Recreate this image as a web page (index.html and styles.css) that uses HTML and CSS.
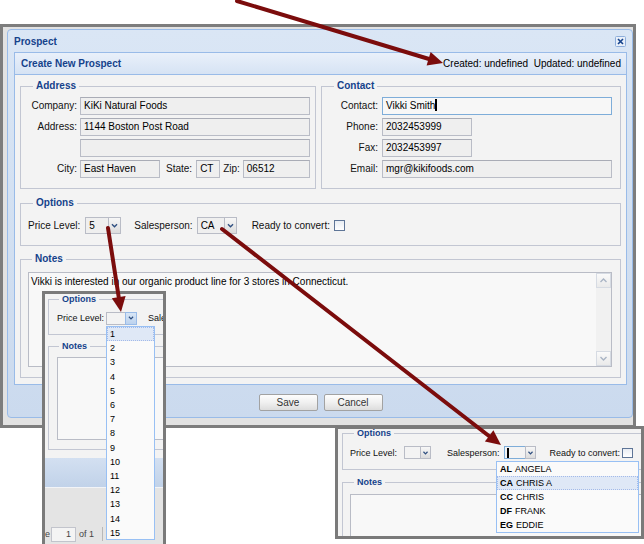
FILE: index.html
```html
<!DOCTYPE html>
<html>
<head>
<meta charset="utf-8">
<title>Prospect</title>
<link rel="stylesheet" href="styles.css">
</head>
<body>
<div class="shot">
  <div class="win">
    <div class="win-title">
      <span>Prospect</span>
      <span class="close"><svg width="11" height="11" viewBox="0 0 11 11"><rect x="0.5" y="0.5" width="10" height="10" rx="1" fill="#e8eff9" stroke="#8eaedb"/><path d="M3 3 L8 8 M8 3 L3 8" stroke="#15428b" stroke-width="1.6"/></svg></span>
    </div>
    <div class="panel">
      <div class="panel-head">
        <span class="ph-title">Create New Prospect</span>
        <span class="ph-meta">Created: undefined&nbsp; Updated: undefined</span>
      </div>
      <div class="panel-body">
        <div class="row-top">
          <fieldset class="fs fs-address">
            <legend>Address</legend>
            <div class="grid grid-address">
              <label>Company:</label><div class="input">KiKi Natural Foods</div>
              <label>Address:</label><div class="input">1144 Boston Post Road</div>
              <label></label><div class="input"></div>
              <label>City:</label>
              <div class="city-row">
                <div class="input w-city">East Haven</div>
                <label class="lbl-state">State:</label>
                <div class="input w-state">CT</div>
                <label class="lbl-zip">Zip:</label>
                <div class="input w-zip">06512</div>
              </div>
            </div>
          </fieldset>
          <fieldset class="fs fs-contact">
            <legend>Contact</legend>
            <div class="grid grid-contact">
              <label>Contact:</label><div class="input focus">Vikki Smith<span class="caret"></span></div>
              <label>Phone:</label><div class="input w-phone">2032453999</div>
              <label>Fax:</label><div class="input w-phone">2032453997</div>
              <label>Email:</label><div class="input">mgr@kikifoods.com</div>
            </div>
          </fieldset>
        </div>
        <fieldset class="fs fs-options">
          <legend>Options</legend>
          <div class="opt-row">
            <span>Price Level:</span>
            <span class="combo c-price"><span class="c-in">5</span><span class="c-tr"><svg width="13" height="15" viewBox="0 0 13 15"><path d="M3.5 6 L6.5 9 L9.5 6" fill="none" stroke="#2f4f80" stroke-width="1.6"/></svg></span></span>
            <span class="lbl-sales">Salesperson:</span>
            <span class="combo c-sales"><span class="c-in">CA</span><span class="c-tr"><svg width="13" height="15" viewBox="0 0 13 15"><path d="M3.5 6 L6.5 9 L9.5 6" fill="none" stroke="#2f4f80" stroke-width="1.6"/></svg></span></span>
            <span class="lbl-ready">Ready to convert:</span>
            <span class="check"></span>
          </div>
        </fieldset>
        <fieldset class="fs fs-notes">
          <legend>Notes</legend>
          <div class="textarea">
            <div class="ta-text">Vikki is interested in our organic product line for 3 stores in Connecticut.</div>
            <div class="sbar">
              <span class="sb-btn"><svg width="13" height="13" viewBox="0 0 13 13"><path d="M3.5 8 L6.5 5 L9.5 8" fill="none" stroke="#a9b4c4" stroke-width="1.4"/></svg></span>
              <span class="sb-track"></span>
              <span class="sb-btn"><svg width="13" height="13" viewBox="0 0 13 13"><path d="M3.5 5 L6.5 8 L9.5 5" fill="none" stroke="#a9b4c4" stroke-width="1.4"/></svg></span>
            </div>
          </div>
        </fieldset>
      </div>
    </div>
    <div class="win-foot">
      <button class="btn">Save</button>
      <button class="btn">Cancel</button>
    </div>
  </div>
</div>

<div class="inset inset-left">
  <div class="li-body">
    <fieldset class="ifs li-options">
      <legend>Options</legend>
      <div class="irow">
        <span class="li-lbl">Price Level:</span>
        <span class="icombo li-combo"><span class="ic-in"></span><span class="ic-tr active"><svg width="12" height="12" viewBox="0 0 12 12"><path d="M3.5 4.5 L6 7 L8.5 4.5" fill="none" stroke="#2f4f80" stroke-width="1.5"/></svg></span></span>
        <span class="li-sale">Sale</span>
      </div>
    </fieldset>
    <fieldset class="ifs li-notes">
      <legend>Notes</legend>
      <div class="ita li-ta"></div>
    </fieldset>
  </div>
  <div class="li-band"></div>
  <div class="li-pager">
    <span class="pg-page">e</span>
    <span class="pg-input">1</span>
    <span class="pg-of">of 1</span>
    <span class="pg-sep"></span>
  </div>
  <div class="ilist li-list">
    <div class="it sel">1</div>
    <div class="it">2</div>
    <div class="it">3</div>
    <div class="it">4</div>
    <div class="it">5</div>
    <div class="it">6</div>
    <div class="it">7</div>
    <div class="it">8</div>
    <div class="it">9</div>
    <div class="it">10</div>
    <div class="it">11</div>
    <div class="it">12</div>
    <div class="it">13</div>
    <div class="it">14</div>
    <div class="it">15</div>
  </div>
</div>

<div class="inset inset-right">
  <fieldset class="ifs ri-options">
    <legend>Options</legend>
    <div class="irow">
      <span>Price Level:</span>
      <span class="icombo ri-c1"><span class="ic-in"></span><span class="ic-tr"><svg width="11" height="12" viewBox="0 0 11 12"><path d="M3 4.5 L5.5 7 L8 4.5" fill="none" stroke="#2f4f80" stroke-width="1.5"/></svg></span></span>
      <span class="ri-sales">Salesperson:</span>
      <span class="icombo ri-c2"><span class="ic-in"><span class="icaret"></span></span><span class="ic-tr"><svg width="11" height="12" viewBox="0 0 11 12"><path d="M3 4.5 L5.5 7 L8 4.5" fill="none" stroke="#2f4f80" stroke-width="1.5"/></svg></span></span>
      <span class="ri-ready">Ready to convert:</span>
      <span class="icheck"></span>
    </div>
  </fieldset>
  <fieldset class="ifs ri-notes">
    <legend>Notes</legend>
    <div class="ita ri-ta"></div>
  </fieldset>
  <div class="ilist ri-list">
    <div class="it"><b>AL</b> ANGELA</div>
    <div class="it sel"><b>CA</b> CHRIS A</div>
    <div class="it"><b>CC</b> CHRIS</div>
    <div class="it"><b>DF</b> FRANK</div>
    <div class="it"><b>EG</b> EDDIE</div>
  </div>
</div>

<svg class="arrows" width="644" height="544" viewBox="0 0 644 544">
  <g stroke="#7b0c0c" stroke-width="4" stroke-linecap="round" fill="#7b0c0c">
    <line x1="237" y1="1" x2="429" y2="59"/>
    <polygon stroke="none" points="443,63 426.6,65.4 430.6,52"/>
    <line x1="108" y1="228" x2="118.7" y2="297"/>
    <polygon stroke="none" points="121,312 111.8,298.3 125.6,296.1"/>
    <line x1="222" y1="229" x2="489" y2="436"/>
    <polygon stroke="none" points="501,445 484.9,441.4 493.4,430.3"/>
  </g>
</svg>
</body>
</html>
```

FILE: styles.css
```css
html, body {
  margin: 0;
  padding: 0;
}
body {
  width: 644px;
  height: 544px;
  position: relative;
  overflow: hidden;
  background: #ffffff;
  font-family: "Liberation Sans", Arial, sans-serif;
  font-size: 10px;
  color: #111;
}

/* main screenshot frame */
.shot {
  margin-top: 24px;
  width: 636px;
  height: 404px;
  box-sizing: border-box;
  border: 3px solid #7d7d7d;
  background: #e2e2e2;
  padding: 2px 0 0 4px;
}
.win {
  width: 626px;
  height: 389px;
  box-sizing: border-box;
  border: 1px solid #99bbe8;
  border-radius: 4px;
  background: linear-gradient(#dae6f5, #cbdaee);
  padding: 0 5px 0 6px;
  display: flex;
  flex-direction: column;
}
.win-title {
  height: 22px;
  display: flex;
  align-items: center;
  justify-content: space-between;
  font-weight: bold;
  color: #15428b;
}
.close {
  display: flex;
  margin-right: 1px;
}
.panel {
  height: 333px;
  box-sizing: border-box;
  border: 1px solid #99bbe8;
  display: flex;
  flex-direction: column;
  background: #f3f3f3;
}
.panel-head {
  height: 22px;
  box-sizing: border-box;
  border-bottom: 1px solid #99bbe8;
  background: linear-gradient(#e9f0fa, #d6e3f4);
  display: flex;
  align-items: center;
  justify-content: space-between;
  padding: 0 5px 0 6px;
}
.ph-title {
  font-weight: bold;
  color: #15428b;
}
.ph-meta {
  color: #000;
}
.panel-body {
  flex: 1;
  padding: 5px 5px 0 5px;
  background: #f3f3f3;
}

/* fieldsets */
.fs {
  margin: 0;
  min-width: 0;
  border: 1px solid #c2c6d2;
  padding: 5px 8px 10px 8px;
}
.fs legend {
  padding: 0 3px;
  margin-left: 4px;
  font-weight: bold;
  color: #15428b;
  line-height: 12px;
}
.row-top {
  display: flex;
  gap: 5px;
}
.fs-address {
  width: 296px;
  box-sizing: border-box;
  flex: none;
  padding-right: 5px;
}
.fs-contact {
  flex: 1;
}
.grid {
  display: grid;
  grid-auto-rows: 18px;
  row-gap: 3px;
}
.grid-address {
  grid-template-columns: 48px 1fr;
  column-gap: 3px;
}
.grid-contact {
  grid-template-columns: 48px 1fr;
  column-gap: 4px;
}
.grid label {
  text-align: right;
  line-height: 18px;
  color: #111;
}
.input {
  box-sizing: border-box;
  height: 18px;
  line-height: 16px;
  padding: 0 3px;
  border: 1px solid #b9bcc6;
  border-top-color: #a9acb6;
  background: #efefef;
  color: #000;
  white-space: nowrap;
  overflow: hidden;
}
.input.focus {
  border-color: #7eadd9;
  background: #f7f7f7;
}
.caret {
  display: inline-block;
  width: 2px;
  height: 12px;
  background: #000;
  vertical-align: -2px;
}
.w-phone {
  width: 90px;
}
.city-row {
  display: flex;
  align-items: center;
}
.city-row label {
  line-height: 18px;
}
.w-city {
  width: 80px;
}
.lbl-state {
  margin: 0 4px 0 6px;
}
.w-state {
  width: 24px;
}
.lbl-zip {
  margin: 0 3px 0 3px;
}
.w-zip {
  flex: 1;
}

/* options */
.fs-options {
  margin-top: 8px;
  padding: 8px 8px 11px 8px;
}
.opt-row {
  display: flex;
  align-items: center;
  height: 17px;
  margin-left: -1px;
}
.combo {
  display: flex;
  height: 17px;
  box-sizing: border-box;
}
.c-in {
  box-sizing: border-box;
  border: 1px solid #b9bcc6;
  border-right: none;
  background: #efefef;
  line-height: 15px;
  padding: 0 3px;
  color: #000;
}
.c-tr {
  width: 13px;
  box-sizing: border-box;
  border: 1px solid #b9bcc6;
  background: linear-gradient(#f7f7f7, #dcdcdc);
  display: flex;
  align-items: center;
  justify-content: center;
}
.c-price {
  margin-left: 5px;
}
.c-price .c-in {
  width: 23px;
}
.lbl-sales {
  margin-left: 13px;
}
.c-sales {
  margin-left: 4px;
}
.c-sales .c-in {
  width: 27px;
}
.lbl-ready {
  margin-left: 15px;
}
.check {
  width: 11px;
  height: 11px;
  box-sizing: border-box;
  margin-left: 4px;
  border: 1px solid #5e7597;
  background: linear-gradient(#e9edf3, #ffffff);
}

/* notes */
.fs-notes {
  margin-top: 7px;
  padding: 7px 8px 10px 7px;
}
.textarea {
  height: 95px;
  box-sizing: border-box;
  border: 1px solid #b9bcc6;
  background: #f8f8f8;
  display: flex;
}
.ta-text {
  flex: 1;
  padding: 3px 2px;
  line-height: 12px;
  color: #000;
}
.sbar {
  width: 15px;
  display: flex;
  flex-direction: column;
  background: #f1f1f1;
}
.sb-btn {
  height: 15px;
  box-sizing: border-box;
  border: 1px solid #d6dbe3;
  background: linear-gradient(#fafafa, #eaeaea);
  display: flex;
  align-items: center;
  justify-content: center;
}
.sb-track {
  flex: 1;
}

/* footer */
.win-foot {
  flex: 1;
  display: flex;
  justify-content: center;
  gap: 6px;
  padding-top: 9px;
  box-sizing: border-box;
}
.btn {
  width: 59px;
  height: 17px;
  padding: 0;
  border: 1px solid #a2a2a2;
  border-radius: 2px;
  background: linear-gradient(#fdfdfd, #f0f0f0 50%, #dddddd);
  font-family: "Liberation Sans", Arial, sans-serif;
  font-size: 10px;
  color: #333;
}

/* insets */
.inset {
  position: absolute;
  box-sizing: border-box;
  border: 3px solid #7a7a7a;
  overflow: hidden;
  background: #f3f3f3;
  font-size: 9px;
}
.ifs {
  margin: 0;
  min-width: 0;
  border: 1px solid #c2c6d2;
  box-sizing: border-box;
}
.ifs legend {
  font-weight: bold;
  color: #15428b;
  padding: 0 3px;
}
.irow {
  display: flex;
  align-items: center;
  white-space: nowrap;
}
.icombo {
  display: flex;
  box-sizing: border-box;
}
.ic-in {
  box-sizing: border-box;
  border: 1px solid #b9bcc6;
  border-right: none;
  background: #f3f3f3;
  position: relative;
}
.ic-tr {
  box-sizing: border-box;
  border: 1px solid #b9bcc6;
  background: linear-gradient(#f7f7f7, #dcdcdc);
  display: flex;
  align-items: center;
  justify-content: center;
}
.ic-tr.active {
  border-color: #99bbe8;
  background: linear-gradient(#d8e6f6, #bcd2ee);
}
.ita {
  box-sizing: border-box;
  border: 1px solid #b9bcc6;
  background: #f8f8f8;
}
.ilist {
  position: absolute;
  box-sizing: border-box;
  border: 1px solid #98c0f4;
  background: #fafafa;
  color: #000;
}
.it {
  box-sizing: border-box;
  border: 1px solid transparent;
  white-space: nowrap;
  display: flex;
  align-items: center;
}
.it.sel {
  background: #dfe8f6;
  border: 1px dotted #a3bae9;
}
.it b {
  margin-right: 3px;
}

/* left inset */
.inset-left {
  left: 42px;
  top: 291px;
  width: 124px;
  height: 262px;
}
.li-body {
  height: 164px;
  box-sizing: border-box;
  padding: 0 0 0 3px;
  background: #f3f3f3;
}
.li-options {
  width: 200px;
  padding: 6px 0 9px 8px;
}
.li-options legend,
.li-notes legend {
  line-height: 11px;
  margin-left: 2px;
}
.li-options .irow {
  height: 14px;
}
.li-lbl {
  width: 49px;
  flex: none;
}
.li-combo {
  height: 13px;
}
.li-combo .ic-in {
  width: 19px;
}
.li-combo .ic-tr {
  width: 12px;
}
.li-sale {
  margin-left: 11px;
}
.li-notes {
  width: 200px;
  margin-top: 6px;
  padding: 5px 0 9px 8px;
}
.li-ta {
  height: 83px;
  width: 120px;
}
.li-band {
  height: 29px;
  background: linear-gradient(#d3e0f1, #c1d2e9);
}
.li-pager {
  height: 70px;
  box-sizing: border-box;
  border-top: 1px solid #f2f4f7;
  background: #e4e4e4;
  padding-top: 39px;
  display: flex;
  align-items: flex-start;
  color: #444;
  white-space: nowrap;
}
.pg-page {
  margin-left: 0;
  line-height: 15px;
}
.pg-input {
  width: 25px;
  height: 15px;
  box-sizing: border-box;
  border: 1px solid #c2c4cc;
  background: #f4f4f4;
  margin-left: 1px;
  text-align: right;
  padding-right: 4px;
  line-height: 13px;
}
.pg-of {
  margin-left: 3px;
  line-height: 15px;
}
.pg-sep {
  width: 1px;
  height: 14px;
  margin-left: 8px;
  background: #b8b8b8;
}
.li-list {
  left: 61px;
  top: 32px;
  width: 49px;
  height: 214px;
}
.li-list .it {
  height: 14.2px;
  padding-left: 2px;
}

/* right inset */
.inset-right {
  left: 335px;
  top: 426px;
  width: 309px;
  height: 113px;
}
.ri-options {
  width: 320px;
  margin-left: 4px;
  padding: 9px 0 10px 7px;
}
.ri-options legend,
.ri-notes legend {
  line-height: 8px;
  margin-left: 4px;
}
.ri-options .irow {
  height: 13px;
}
.ri-c1 {
  margin-left: 7px;
  height: 13px;
}
.ri-c1 .ic-in {
  width: 16px;
}
.ri-c1 .ic-tr,
.ri-c2 .ic-tr {
  width: 11px;
}
.ri-sales {
  margin-left: 16px;
}
.ri-c2 {
  margin-left: 4px;
  height: 13px;
}
.ri-c2 .ic-in {
  width: 21px;
  border-color: #7eadd9;
}
.icaret {
  position: absolute;
  left: 2px;
  top: 1px;
  width: 2px;
  height: 10px;
  background: #000;
}
.ri-ready {
  margin-left: 14px;
}
.icheck {
  width: 11px;
  height: 10px;
  box-sizing: border-box;
  margin-left: 2px;
  border: 1px solid #5e7597;
  background: linear-gradient(#e9edf3, #ffffff);
}
.ri-notes {
  width: 320px;
  margin-left: 4px;
  margin-top: 8px;
  padding: 8px 0 0 7px;
}
.ri-ta {
  height: 80px;
  width: 300px;
}
.ri-list {
  left: 158px;
  top: 32px;
  width: 143px;
  height: 72px;
}
.ri-list .it {
  height: 14px;
  padding-left: 2px;
}

/* overlay arrows */
.arrows {
  position: absolute;
  left: 0;
  top: 0;
  pointer-events: none;
}
```
